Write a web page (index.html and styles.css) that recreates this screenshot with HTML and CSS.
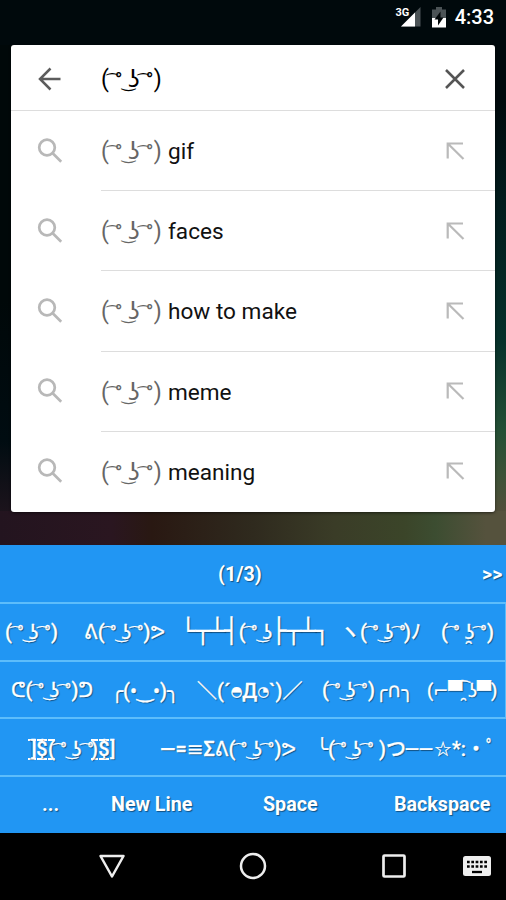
FILE: index.html
```html
<!DOCTYPE html>
<html lang="en">
<head>
<meta charset="utf-8">
<title>Search</title>
<link rel="stylesheet" href="styles.css">
</head>
<body>
<svg class="defs" width="0" height="0" aria-hidden="true">
<symbol id="search" viewBox="0 0 28 28"><g fill="none" stroke="#b8b8b8" stroke-width="2.700"><circle cx="11" cy="10.500" r="7.800"/><path d="M16.700 16.200l8.500 8.500"/></g></symbol>
<symbol id="fill" viewBox="0 0 20 20"><path d="M2.700 17.500V2.500H18M3.500 3.300L18.500 18" fill="none" stroke="#bababa" stroke-width="2.200"/></symbol>
</svg>
<div class="status">
<svg width="30" height="22" viewBox="0 0 30 22"><path d="M6 20.500L25.500 1V20.500z" fill="#4b5356"/><path d="M6 20.500L20 6.500V20.500z" fill="#fff"/><text x="0.500" y="10" class="net">3G</text></svg>
<svg class="battery" width="14" height="21" viewBox="0 0 14 21"><path d="M0 2.500h4V0h6v2.500h4V11H0z" fill="#4b5356"/><path d="M0 11h14v9.500H0z" fill="#fff"/><path d="M8.500 4.500L2.500 12.500h3.500V18.500L11.500 10.500H8.500z" fill="#000608"/></svg>
<span>4:33</span>
</div>
<main class="card">
<div class="bar">
<svg class="lead" width="28" height="28" viewBox="0 0 28 28"><path d="M24.500 14H4.500M14.500 3.500L4 14l10.500 10.500" fill="none" stroke="#5c5c5c" stroke-width="2.500"/></svg>
<span class="query"><span class="face">(<i class="lenny"></i>)</span></span>
<svg class="trail" width="20" height="20" viewBox="0 0 20 20"><path d="M1 1l18 18M19 1L1 19" fill="none" stroke="#555" stroke-width="2.500"/></svg>
</div>
<div class="row"><svg class="lead" width="28" height="28"><use href="#search"/></svg><span class="query"><span class="face">(<i class="lenny"></i>)</span><b>gif</b></span><svg class="trail" width="20" height="20"><use href="#fill"/></svg></div>
<div class="row"><svg class="lead" width="28" height="28"><use href="#search"/></svg><span class="query"><span class="face">(<i class="lenny"></i>)</span><b>faces</b></span><svg class="trail" width="20" height="20"><use href="#fill"/></svg></div>
<div class="row"><svg class="lead" width="28" height="28"><use href="#search"/></svg><span class="query"><span class="face">(<i class="lenny"></i>)</span><b>how to make</b></span><svg class="trail" width="20" height="20"><use href="#fill"/></svg></div>
<div class="row"><svg class="lead" width="28" height="28"><use href="#search"/></svg><span class="query"><span class="face">(<i class="lenny"></i>)</span><b>meme</b></span><svg class="trail" width="20" height="20"><use href="#fill"/></svg></div>
<div class="row"><svg class="lead" width="28" height="28"><use href="#search"/></svg><span class="query"><span class="face">(<i class="lenny"></i>)</span><b>meaning</b></span><svg class="trail" width="20" height="20"><use href="#fill"/></svg></div>
</main>
<section class="keyboard">
<div class="keys pager"><span>(1/3)</span><span>&gt;&gt;</span></div>
<div class="keys kao r1"><span>(<i class="lenny"></i>)</span><span>ᕕ(<i class="lenny"></i>)ᕗ</span><span><i class="box">└┬┴┤</i>(<i class="lenny half"></i><i class="box">├┬┴┐</i></span><span>ヽ(<i class="lenny tight"></i>)ﾉ</span><span>(<i class="lenny chin"></i>)</span></div>
<div class="keys kao r2"><span>ᕦ(<i class="lenny"></i>)ᕤ</span><span>╭(•‿•)╮</span><span>＼(´<i class="eye">◓</i>Д<i class="eye">◔</i>`)／</span><span>(<i class="lenny"></i>)╭∩╮</span><span class="shades">(⌐▀͡ ̯ʖ▀)</span></div>
<div class="keys kao r3"><span><i class="ov first"><i class="flip">[</i></i><i class="ov">$</i><i class="ov paren">(</i><i class="lenny"></i><i class="ov last">)</i><i class="ov">$</i>]</span><span>―=≡Σᕕ(<i class="lenny"></i>)ᕗ</span><span>╰(<i class="lenny"></i> )つ<i class="wand">──</i>☆*:・ﾟ</span></div>
<div class="keys r4"><span>...</span><span>New Line</span><span>Space</span><span>Backspace</span></div>
</section>
<nav class="nav">
<svg width="28" height="28" viewBox="0 0 28 28"><path d="M2.500 4h23L14 24.500z" fill="none" stroke="#eee" stroke-width="2.500" stroke-linejoin="round"/></svg>
<svg width="28" height="28" viewBox="0 0 28 28"><circle cx="14" cy="14" r="12" fill="none" stroke="#eee" stroke-width="2.500"/></svg>
<svg width="28" height="28" viewBox="0 0 28 28"><rect x="3.500" y="3.500" width="21" height="21" rx="1" fill="none" stroke="#eee" stroke-width="2.700"/></svg>
<svg class="kb" width="30" height="22" viewBox="0 0 30 22"><rect x="1" y="1" width="28" height="20" rx="2.500" fill="#eee"/><path d="M5 7h20M5 11.500h20" stroke="#000" stroke-width="2.600" stroke-dasharray="2.700 1.620"/><path d="M10 17h10" stroke="#000" stroke-width="2.300"/></svg>
</nav>
<script src="script.js"></script>
</body>
</html>
```
FILE: script.js
```js
// Expands each face placeholder into separately spaced glyphs.
const NB = '\u00a0';
document.querySelectorAll('.lenny').forEach((el) => {
  const chin = el.classList.contains('chin');
  const parts = [
    ['arc', NB + '\u0361'],
    ['deg', '°'],
    ['smile', chin ? NB : NB + '\u035c'],
    ['nose', chin ? 'ʖ\u032f' : 'ʖ'],
  ];
  if (!el.classList.contains('half')) parts.push(['arc', NB + '\u0361'], ['deg', '°']);
  parts.forEach(([name, text]) => {
    const s = document.createElement('span');
    s.className = name;
    const t = document.createElement('u');
    t.textContent = text;
    s.append(t);
    el.append(s);
  });
});
```
FILE: styles.css
```css
*{box-sizing:border-box}
i,u{font-style:normal;text-decoration:none}
body{margin:0;width:506px;height:900px;overflow:hidden;background:linear-gradient(90deg,#23141f 0,#2a1620 22%,#291812 30%,#2f2a1e 50%,#3a3c27 66%,#3b4529 80%,#3c4d31 86%,#55523d 96%) 0 511px/100% 36px no-repeat,linear-gradient(#00090c 100px,#021b1c 200px,#06302a 340px,#244f35 430px,#3d5237 475px,#514e3a 511px) 100% 0/20px 511px no-repeat,linear-gradient(#000809 300px,#000c11 440px,#1f141d 520px);font-family:Roboto,"DejaVu Sans","Noto Sans CJK JP",sans-serif;display:flex;flex-direction:column}
.defs{position:absolute}
.status{height:45px;padding:6px 12px 0 0;display:flex;justify-content:flex-end;color:#fff;font-size:20px;font-weight:500;line-height:23px;background:#00090c}
.net{font-size:11px;font-weight:700;fill:#fff}
.battery{margin:1px 9px 0 7px}
.card{margin:0 11px;height:466.500px;background:#fff;border-radius:3px;box-shadow:0 1px 3px #0008}
.bar,.row{display:flex;align-items:center;height:80.200px;padding:0 30px 0 25px;font-size:22.600px}
.bar{height:66px;padding-top:3px;border-bottom:1.500px solid #ddd}
.row svg{margin-bottom:1px}
.query{margin-left:37px;flex:1;height:100%;display:flex;align-items:center;white-space:pre;padding-top:1px}
.row .face{color:#666}
.face{width:67px;font-size:23px}
.row b{font-weight:400;color:#111}
.row{background:linear-gradient(#ddd,#ddd) 90px 100%/100% 1px no-repeat}
.row:last-child{background:none}

.lenny{display:inline-flex;align-items:baseline;width:1.95em;white-space:pre}
.lenny span{display:flex;justify-content:center;flex:none;width:.55em}
.lenny span.arc,.lenny span.smile{width:.15em;justify-content:flex-end}
.lenny .arc u{font-size:.6em;transform:translateY(-.1em)}
.lenny .smile u{font-size:.72em}
.lenny .deg u{font-size:.9em}
.lenny .nose{width:.47em}
.lenny .nose + .arc{width:.18em}
.lenny.half{width:1.3em}
.lenny.tight{width:1.85em}

.keyboard{margin-top:33.500px;background:#2196f3;color:#fff;font-size:19.700px;font-weight:500;text-shadow:1px 1px 1px #0007}
.keys{height:57.700px;display:grid;align-items:center;white-space:pre;border-top:2px solid #5dbdfb;line-height:28px;padding-top:1px}
.pager{border:0;height:57px;padding-top:3px;grid-template-columns:218px 264px;font-weight:700}
.pager span:first-child{grid-column:2}
.pager span:last-child{grid-column:3}
.kao{-webkit-text-stroke:.3px #fff;font-size:20px;padding-top:3px}
.r1{grid-template-columns:5px 79px 97px 159px 101px 60px}
.r2{grid-template-columns:11px 100px 86px 125px 105px 70px}
.r3{grid-template-columns:28px 132px 156px 190px;padding-top:6px}
.r4{grid-template-columns:42px 69px 152px 131px 100px;font-weight:700}
.keys::before{content:""}
.pager::before{display:none}
.r1,.r2{border-right:1px solid #5dbdfb}
.box{font-size:24px;line-height:28px}
.shades{font-size:18px}
.eye{display:inline-block;font-size:.68em;vertical-align:.1em}
.ov{display:inline-flex;justify-content:center;align-items:center;width:10px;height:21px;margin-right:1px;border:solid #fff;border-width:2px 0;line-height:17px}
.ov.first{width:8px;justify-content:flex-end}
.ov.paren,.ov.last{width:7px;margin-right:0}
.ov.last{margin:0 1px 0 -3px}
.flip{transform:scaleX(-1)}
.wand{letter-spacing:2px}
.nav{flex:1;background:#000;display:grid;grid-template-columns:98px 141px 140.500px 82.500px 30px;align-items:center}
.nav::before{content:""}
```
